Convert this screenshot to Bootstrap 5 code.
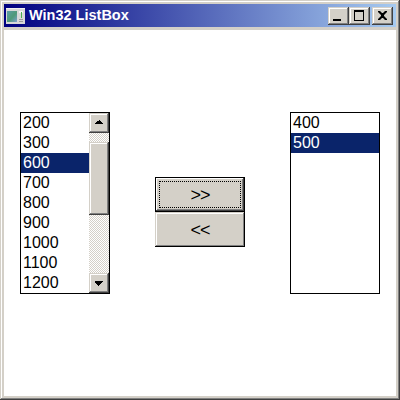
<!DOCTYPE html>
<html lang="en">
<head>
<meta charset="utf-8">
<title>Win32 ListBox</title>
<link rel="stylesheet" href="https://cdn.jsdelivr.net/npm/bootstrap@5.3.0/dist/css/bootstrap.min.css">
<style>
html, body { margin: 0; width: 400px; height: 400px; overflow: hidden; background: #d4d0c8; }
.win-frame { width: 400px; height: 400px; padding: 4px; background: #d4d0c8; font-family: "Liberation Sans", Arial, sans-serif;
  box-shadow: inset -1px -1px 0 #404040, inset 1px 1px 0 #d4d0c8, inset -2px -2px 0 #808080, inset 2px 2px 0 #fff; }
.win-title { height: 23px; padding-left: 2px; padding-right: 2px; background: linear-gradient(90deg, #000080, #a6caf0); color: #fff; font-weight: 700; font-size: 14.5px; line-height: 23px; }
.win-title svg { margin-right: 4px; flex: none; }
.cap-btn, .sb-btn, .sb-thumb { background: #d4d0c8; box-shadow: inset -1px -1px 0 #404040, inset 1px 1px 0 #d4d0c8, inset -2px -2px 0 #808080, inset 2px 2px 0 #fff; }
.cap-btn { width: 21px; height: 18px; flex: none; }
.cap-close { margin-left: 2px; margin-right: 1px; }
.win-client { height: 366px; margin-top: 3px; background: #fff; padding: 82px 16px 0; }
.lbox { width: 90px; height: 182px; border: 1px solid #000; background: #fff; overflow: hidden; }
.lbox-items { flex: 1 1 auto; border-radius: 0; font-size: 16px; }
.lbox-items .list-group-item { height: 20px; padding: 0 0 0 2px; border: 0; border-radius: 0; line-height: 20px; color: #000; background: transparent; }
.lbox-items .list-group-item.active { margin-top: 0; background: #0a246a; color: #fff; }
.sbar { width: 20px; flex: none; }
.sb-btn { height: 20px; }
.sb-track { height: 9px; background: conic-gradient(#fff 25%, #d4d0c8 0 50%, #fff 0 75%, #d4d0c8 0) 0 0 / 2px 2px; }
.sb-track-long { height: 58px; }
.sb-thumb { height: 73px; }
.mid-col { width: 90px; padding-top: 65px; }
.w-btn { display: block; width: 90px; height: 35px; padding: 2px 0 0; border: 0; border-radius: 0; background: #d4d0c8; color: #000; font-size: 18px; letter-spacing: -1px; line-height: 33px; position: relative;
  box-shadow: inset -1px -1px 0 #000, inset 1px 1px 0 #d4d0c8, inset -2px -2px 0 #808080, inset 2px 2px 0 #fff; }
.w-btn:hover, .w-btn:active { background: #d4d0c8; color: #000; }
.w-default { box-shadow: inset 0 0 0 1px #000, inset -2px -2px 0 #404040, inset 2px 2px 0 #fff, inset -3px -3px 0 #808080; }
.w-focus { position: absolute; top: 4px; left: 4px; right: 4px; bottom: 4px; border: 1px dotted #000; }
</style>
</head>
<body>
<div class="win-frame">
  <div class="win-title d-flex align-items-center">
    <svg width="19" height="16" viewBox="0 0 19 16" aria-hidden="true">
      <defs><linearGradient id="pic" x1="0" y1="0" x2="1" y2="1"><stop offset="0" stop-color="#5f9ea8"/><stop offset=".55" stop-color="#4f9a78"/><stop offset="1" stop-color="#7fa0d0"/></linearGradient></defs>
      <rect x="0" y="0" width="19" height="16" fill="#d8d8d8"/>
      <rect x="0" y="0" width="19" height="1" fill="#f0f0f0"/>
      <rect x="1" y="3" width="10" height="11" fill="url(#pic)"/>
      <rect x="13" y="3" width="4" height="2" fill="#f4f4f4"/>
      <rect x="15" y="4" width="1" height="6" fill="#4caf50"/>
      <rect x="13" y="11" width="4" height="1" fill="#9a9a9a"/>
      <rect x="13" y="13" width="4" height="1" fill="#9a9a9a"/>
    </svg>
    <span class="flex-grow-1">Win32 ListBox</span>
    <div class="cap-btn d-flex" aria-label="Minimize"><svg width="21" height="18" viewBox="0 0 21 18"><rect x="5" y="12" width="8" height="2" fill="#000"/></svg></div>
    <div class="cap-btn d-flex" aria-label="Maximize"><svg width="21" height="18" viewBox="0 0 21 18"><path d="M5 3h10v11H5z M6 5v8h8V5z" fill="#000" fill-rule="evenodd"/></svg></div>
    <div class="cap-btn cap-close d-flex" aria-label="Close"><svg width="21" height="18" viewBox="0 0 21 18"><path d="M6 4h2l2 2h1l2-2h2v1l-3 3v1l3 3v1h-2l-2-2h-1l-2 2H6v-1l3-3V8L6 5z" fill="#000"/></svg></div>
  </div>
  <div class="win-client d-flex justify-content-between align-items-start">
    <div class="lbox d-flex">
      <div class="list-group lbox-items">
        <div class="list-group-item">200</div>
        <div class="list-group-item">300</div>
        <div class="list-group-item active">600</div>
        <div class="list-group-item">700</div>
        <div class="list-group-item">800</div>
        <div class="list-group-item">900</div>
        <div class="list-group-item">1000</div>
        <div class="list-group-item">1100</div>
        <div class="list-group-item">1200</div>
      </div>
      <div class="sbar d-flex flex-column">
        <div class="sb-btn d-flex"><svg width="20" height="20" viewBox="0 0 20 20"><path d="M10 7h1v1h1v1h1v1h1v1H6v-1h1V9h1V8h2z" fill="#000"/></svg></div>
        <div class="sb-track"></div>
        <div class="sb-thumb"></div>
        <div class="sb-track sb-track-long"></div>
        <div class="sb-btn d-flex"><svg width="20" height="20" viewBox="0 0 20 20"><path d="M6 8h8v1h-1v1h-1v1h-1v1h-1v1h-1v-1H8v-1H7v-1H6z" fill="#000"/></svg></div>
      </div>
    </div>
    <div class="mid-col d-flex flex-column">
      <button type="button" class="btn w-btn w-default">&gt;&gt;<span class="w-focus"></span></button>
      <button type="button" class="btn w-btn">&lt;&lt;</button>
    </div>
    <div class="lbox d-flex">
      <div class="list-group lbox-items">
        <div class="list-group-item">400</div>
        <div class="list-group-item active">500</div>
      </div>
    </div>
  </div>
</div>
<script src="https://cdn.jsdelivr.net/npm/bootstrap@5.3.0/dist/js/bootstrap.bundle.min.js"></script>
</body>
</html>
